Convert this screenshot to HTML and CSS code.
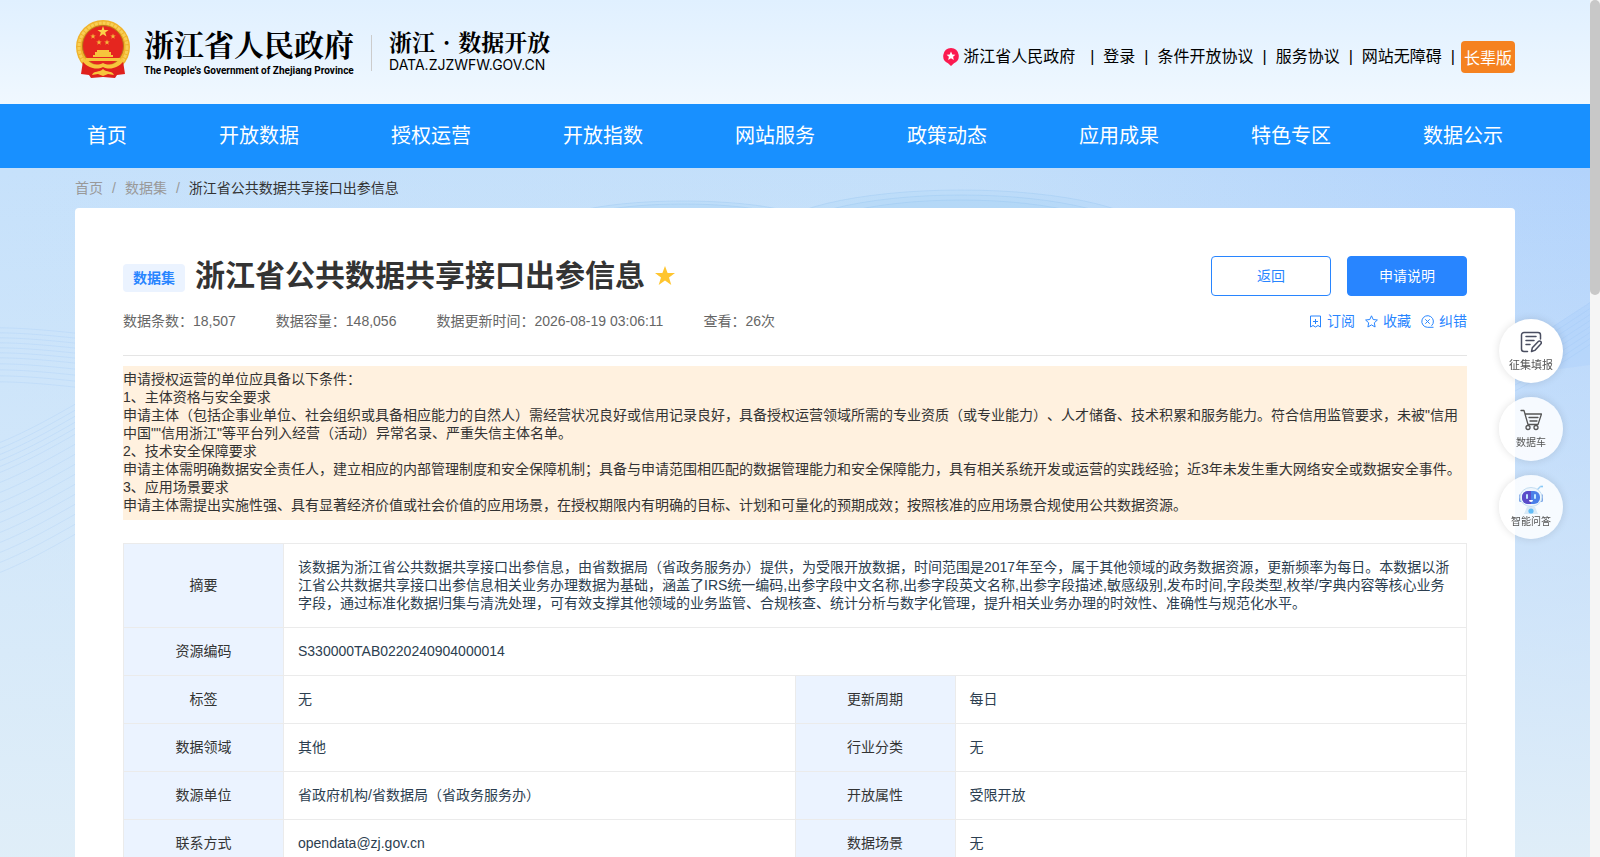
FILE: index.html
```
<!DOCTYPE html>
<html lang="zh-CN">
<head>
  <meta charset="UTF-8">
  <meta name="viewport" content="width=device-width, initial-scale=1.0">
  <title>浙江省公共数据共享接口出参信息</title>
  <link rel="stylesheet" href="styles.css">
</head>
<body>
  <header class="header">
    <div class="container header-inner">
      <a class="logo" href="#">
        <svg class="emblem" viewBox="0 0 56 60" aria-hidden="true">
          <circle cx="28" cy="28" r="27" fill="#f0b32c"/>
          <circle cx="28" cy="28" r="24" fill="none" stroke="#f8cf55" stroke-width="3" stroke-dasharray="3 1"/>
          <circle cx="28" cy="27" r="20.500" fill="#e5261f" stroke="#b9791a" stroke-width="1"/>
          <path d="M8 42 L20 46 L28 44 L36 46 L48 42 L50 55 L42 56 L40 59 L28 58 L16 59 L14 56 L6 55 Z" fill="#df201c"/>
          <path d="M9 39 C16 46 22 47 28 44 C34 47 40 46 47 39 L49 42 C42 50 34 51 28 48 C22 51 14 50 7 42 Z" fill="#f7c53c"/>
          <path d="M17 56 C19 51 24 54 28 50 C32 54 37 51 39 56 L33 55 L28 57 L23 55 Z" fill="#f7c53c"/>
          <path d="M28 7 L29.4 11 L33.6 11 L30.2 13.6 L31.5 17.6 L28 15.2 L24.5 17.6 L25.8 13.6 L22.4 11 L26.6 11 Z" fill="#fbd14a"/>
          <path d="M18 14.500l.7 2h2l-1.600 1.200.6 2-1.700-1.200-1.700 1.200.6-2-1.600-1.200h2zM38 14.500l.7 2h2l-1.600 1.200.6 2-1.700-1.200-1.700 1.200.6-2-1.600-1.200h2zM24 20.500l.7 2h2l-1.600 1.200.6 2-1.700-1.200-1.700 1.200.6-2-1.600-1.200h2zM32 20.500l.7 2h2l-1.600 1.200.6 2-1.700-1.200-1.700 1.200.6-2-1.600-1.200h2z" fill="#f5b93c"/>
          <path d="M22 31h12v2h2v3h2v2H18v-2h2v-3h2zM11 39h34v3H11z" fill="#f7c53c"/>
        </svg>
        <span class="logo-main">
          <span class="logo-name">浙江省人民政府</span>
          <span class="logo-en">The People's Government of Zhejiang Province</span>
        </span>
        <span class="divider"></span>
        <span class="logo-sub">
          <span class="logo-site">浙江 <span class="dot">·</span> 数据开放</span>
          <span class="logo-domain">DATA.ZJZWFW.GOV.CN</span>
        </span>
      </a>
      <div class="top-links">
        <svg class="pin" viewBox="0 0 16 18" aria-hidden="true">
          <path d="M8 0a8 8 0 0 1 3 15.300L8 18l-3-2.700A8 8 0 0 1 8 0z" fill="#fb1a50"/>
          <path d="M8 3.500l1.300 2.900 3.100.3-2.300 2.100.7 3.100L8 10.300l-2.800 1.600.7-3.100-2.300-2.100 3.100-.3z" fill="#fff"/>
        </svg>
        <a class="province" href="#">浙江省人民政府</a>
        <span class="bar">|</span>
        <a href="#">登录</a>
        <span class="bar">|</span>
        <a href="#">条件开放协议</a>
        <span class="bar">|</span>
        <a href="#">服务协议</a>
        <span class="bar">|</span>
        <a href="#">网站无障碍</a>
        <span class="bar">|</span>
        <button class="elder-btn" type="button">长辈版</button>
      </div>
    </div>
  </header>

  <nav class="nav">
    <div class="container nav-inner">
      <a href="#">首页</a>
      <a href="#">开放数据</a>
      <a href="#">授权运营</a>
      <a href="#">开放指数</a>
      <a href="#">网站服务</a>
      <a href="#">政策动态</a>
      <a href="#">应用成果</a>
      <a href="#">特色专区</a>
      <a href="#">数据公示</a>
    </div>
  </nav>

  <main class="main">
    <!-- background waves -->
    <svg class="waves" viewBox="0 0 1600 689" preserveAspectRatio="xMidYMin slice" aria-hidden="true">
      <defs>
        <path id="waveA" d="M-10 160 C40 158 120 170 200 180"/>
        <path id="waveB" d="M-10 320 C20 310 60 290 140 240"/>
        <path id="waveC" d="M1480 200 C1530 180 1570 150 1610 125"/>
      </defs>
      <path d="M1500 205 C1540 205 1570 200 1610 195 L1610 125 C1570 150 1530 180 1500 190 Z" fill="#a9cffb" fill-opacity="0.35"/>
      <g fill="none" stroke="#8fbdf3" stroke-opacity="0.2">
        <use href="#waveA"/><use href="#waveA" y="5"/><use href="#waveA" y="10"/><use href="#waveA" y="15"/>
        <use href="#waveA" y="20"/><use href="#waveA" y="25"/><use href="#waveA" y="30"/><use href="#waveA" y="36"/>
        <use href="#waveA" y="42"/><use href="#waveA" y="48"/><use href="#waveA" y="54"/>
        <use href="#waveB" y="-40"/><use href="#waveB" y="-34"/><use href="#waveB" y="-28"/><use href="#waveB" y="-22"/>
        <use href="#waveB" y="-16"/><use href="#waveB" y="-10"/><use href="#waveB"/><use href="#waveB" y="10"/>
        <use href="#waveB" y="20"/><use href="#waveB" y="30"/><use href="#waveB" y="40"/><use href="#waveB" y="50"/>
        <use href="#waveB" y="60"/><use href="#waveB" y="70"/><use href="#waveB" y="80"/><use href="#waveB" y="90"/>
        <use href="#waveC"/><use href="#waveC" y="6"/><use href="#waveC" y="12"/><use href="#waveC" y="18"/>
        <use href="#waveC" y="24"/><use href="#waveC" y="30"/><use href="#waveC" y="36"/><use href="#waveC" y="42"/>
      </g>
      <g fill="#a5d0f7" fill-opacity="0.2" stroke="#8fc1f0" stroke-opacity="0.3">
        <ellipse cx="688" cy="58" rx="130" ry="25"/>
        <ellipse cx="688" cy="61" rx="122" ry="25"/>
        <ellipse cx="966" cy="68" rx="190" ry="46"/>
        <ellipse cx="966" cy="73" rx="180" ry="46"/>
        <ellipse cx="966" cy="78" rx="170" ry="46"/>
      </g>
    </svg>

    <div class="container">
      <div class="breadcrumb">
        <a href="#">首页</a>
        <span>/</span>
        <a href="#">数据集</a>
        <span>/</span>
        <strong>浙江省公共数据共享接口出参信息</strong>
      </div>

      <section class="card">
        <div class="title-row">
          <span class="tag">数据集</span>
          <h1>浙江省公共数据共享接口出参信息</h1>
          <svg class="star" viewBox="0 0 20 20" aria-hidden="true">
            <path d="M10 0l2.600 7H20l-6 4.500 2.300 7.500L10 14.600 3.700 19 6 11.500 0 7h7.400z" fill="#ffc52e"/>
          </svg>
          <div class="buttons">
            <button class="btn" type="button">返回</button>
            <button class="btn btn-primary" type="button">申请说明</button>
          </div>
        </div>

        <div class="meta-row">
          <span>数据条数：18,507</span>
          <span>数据容量：148,056</span>
          <span>数据更新时间：2026-08-19 03:06:11</span>
          <span>查看：26次</span>
          <div class="actions">
            <a href="#">
              <svg viewBox="0 0 13 13" aria-hidden="true"><path d="M1.500 1h10v11L9 10.500 6.500 12 4 10.500 1.500 12zM6.500 4v5M4 6.500h5"/></svg>
              订阅
            </a>
            <a href="#">
              <svg viewBox="0 0 13 13" aria-hidden="true"><path d="M6.500.8l1.700 3.700 4.200.5-3.100 2.800.8 4.200-3.600-2.100L2.900 12l.8-4.200L.6 5l4.200-.5z"/></svg>
              收藏
            </a>
            <a href="#">
              <svg viewBox="0 0 13 13" aria-hidden="true"><path d="M10.500 10.800A5.800 5.800 0 1 0 6.500 12.300h6M4.300 4.300l4.400 4.400M8.700 4.300L4.300 8.700"/></svg>
              纠错
            </a>
          </div>
        </div>

        <div class="notice">
          <p>申请授权运营的单位应具备以下条件：</p>
          <p>1、主体资格与安全要求</p>
          <p>申请主体（包括企事业单位、社会组织或具备相应能力的自然人）需经营状况良好或信用记录良好，具备授权运营领域所需的专业资质（或专业能力）、人才储备、技术积累和服务能力。符合信用监管要求，未被"信用中国""信用浙江"等平台列入经营（活动）异常名录、严重失信主体名单。</p>
          <p>2、技术安全保障要求</p>
          <p>申请主体需明确数据安全责任人，建立相应的内部管理制度和安全保障机制；具备与申请范围相匹配的数据管理能力和安全保障能力，具有相关系统开发或运营的实践经验；近3年未发生重大网络安全或数据安全事件。</p>
          <p>3、应用场景要求</p>
          <p>申请主体需提出实施性强、具有显著经济价值或社会价值的应用场景，在授权期限内有明确的目标、计划和可量化的预期成效；按照核准的应用场景合规使用公共数据资源。</p>
        </div>

        <table class="info">
          <colgroup>
            <col class="col-label"><col><col class="col-label"><col>
          </colgroup>
          <tr>
            <th scope="row">摘要</th>
            <td colspan="3">该数据为浙江省公共数据共享接口出参信息，由省数据局（省政务服务办）提供，为受限开放数据，时间范围是2017年至今，属于其他领域的政务数据资源，更新频率为每日。本数据以浙江省公共数据共享接口出参信息相关业务办理数据为基础，涵盖了IRS统一编码,出参字段中文名称,出参字段英文名称,出参字段描述,敏感级别,发布时间,字段类型,枚举/字典内容等核心业务字段，通过标准化数据归集与清洗处理，可有效支撑其他领域的业务监管、合规核查、统计分析与数字化管理，提升相关业务办理的时效性、准确性与规范化水平。</td>
          </tr>
          <tr>
            <th scope="row">资源编码</th>
            <td colspan="3">S330000TAB0220240904000014</td>
          </tr>
          <tr>
            <th scope="row">标签</th>
            <td>无</td>
            <th scope="row">更新周期</th>
            <td>每日</td>
          </tr>
          <tr>
            <th scope="row">数据领域</th>
            <td>其他</td>
            <th scope="row">行业分类</th>
            <td>无</td>
          </tr>
          <tr>
            <th scope="row">数源单位</th>
            <td>省政府机构/省数据局（省政务服务办）</td>
            <th scope="row">开放属性</th>
            <td>受限开放</td>
          </tr>
          <tr>
            <th scope="row">联系方式</th>
            <td>opendata@zj.gov.cn</td>
            <th scope="row">数据场景</th>
            <td>无</td>
          </tr>
        </table>
      </section>
    </div>
  </main>

  <aside class="float-menu">
    <a class="float-item solid" href="#">
      <svg viewBox="0 0 22 22" aria-hidden="true" fill="none" stroke="#4a4e60" stroke-width="1.500" stroke-linecap="round" stroke-linejoin="round">
        <path d="M7.500 20.500H4a2.500 2.500 0 0 1-2.500-2.500V4A2.500 2.500 0 0 1 4 1.500h14A2.500 2.500 0 0 1 20.500 4v4M6 5.500h10M6 9.500h8M6 13.500h4"/>
        <path d="M11.500 20.500l.8-3.700 6-6.300a1.700 1.700 0 0 1 2.500 2.400l-6 6.500z"/>
      </svg>
      <span>征集填报</span>
    </a>
    <a class="float-item" href="#">
      <svg viewBox="0 0 22 22" aria-hidden="true" fill="none" stroke="#555" stroke-width="1.300" stroke-linecap="round" stroke-linejoin="round">
        <path d="M1 1.500h3l4 14h10l3.500-10.500H5M9 8.500h9M10 12h7"/>
        <circle cx="8" cy="18.500" r="2"/><circle cx="16" cy="18.500" r="2"/>
      </svg>
      <span>数据车</span>
    </a>
    <a class="float-item" href="#">
      <svg class="robot" viewBox="0 0 26 30" aria-hidden="true">
        <path d="M19 5l4-4" stroke="#9fd0f5" stroke-width="1.500"/>
        <circle cx="24" cy="1.500" r="1" fill="#7cc4f8"/>
        <rect x="1" y="9" width="3" height="8" rx="1.500" fill="#7fa8e8"/>
        <rect x="22" y="9" width="3" height="8" rx="1.500" fill="#7fa8e8"/>
        <ellipse cx="13" cy="12" rx="11" ry="9.500" fill="#eef6fd" stroke="#c3dcf0"/>
        <rect x="4" y="6" width="18" height="13" rx="6" fill="#4a7fe8"/>
        <path d="M4 12a6 6 0 0 1 6-6h3v13h-3a6 6 0 0 1-6-6z" fill="#5b4cc8"/>
        <rect x="8" y="9" width="2" height="5" rx="1" fill="#bfe8ff"/>
        <rect x="16" y="9" width="2" height="5" rx="1" fill="#bfe8ff"/>
        <path d="M11 15h4a2 2 0 0 1-4 0z" fill="#fff"/>
        <path d="M9 22h8l3 7H6z" fill="#d7e9f7"/>
        <circle cx="13" cy="26" r="2.600" fill="#62bdf8"/>
      </svg>
      <span>智能问答</span>
    </a>
  </aside>

  <div class="scrollbar" aria-hidden="true"><div class="scrollbar-thumb"></div></div>
</body>
</html>
```

FILE: styles.css
```
* {
  box-sizing: border-box;
}

html {
  scrollbar-width: none;
}

body {
  margin: 0;
  padding-right: 10px;
  font-family: "Liberation Sans", "Noto Sans CJK SC", sans-serif;
  font-size: 14px;
  line-height: 18px;
  text-spacing-trim: space-all;
  color: #333;
}

a {
  color: inherit;
  text-decoration: none;
}

button {
  font-family: inherit;
  cursor: pointer;
}

.container {
  max-width: 1440px;
  margin: 0 auto;
}

/* header */
.header {
  background: linear-gradient(#e0f0ff, #f0f8ff);
}

.header-inner {
  display: flex;
  justify-content: space-between;
  align-items: center;
  height: 104px;
  padding-bottom: 6px;
}

.logo {
  display: flex;
  align-items: center;
  color: #000;
}

.emblem {
  width: 56px;
  height: 60px;
  margin-right: 13px;
}

.logo-main,
.logo-sub {
  display: flex;
  flex-direction: column;
  margin-top: 8px;
  white-space: nowrap;
}

.logo-name {
  font-family: "Noto Serif CJK SC", "Noto Sans CJK SC", serif;
  font-size: 30px;
  font-weight: bold;
  line-height: 36px;
}

.logo-en {
  font-family: Roboto, "Liberation Sans", sans-serif;
  font-size: 10px;
  font-weight: bold;
  line-height: 20px;
}

.divider {
  width: 1px;
  height: 36px;
  margin: 8px 17px 0;
  background: #ccc;
}

.logo-site {
  font-family: "Noto Serif CJK SC", "Noto Sans CJK SC", serif;
  font-size: 23px;
  font-weight: bold;
  line-height: 24px;
}

.dot {
  margin: 0 2px;
}

.logo-domain {
  font-family: Inter, "Liberation Sans", sans-serif;
  font-size: 14px;
  line-height: 22px;
}

.top-links {
  display: flex;
  align-items: center;
  padding-top: 16px;
  font-size: 16px;
  color: #000;
}

.pin {
  width: 16px;
  height: 18px;
  margin-right: 4px;
}

.province {
  margin-right: 6px;
}

.bar {
  margin: 0 9px;
}

.bar:last-of-type {
  margin-right: 6px;
}

.elder-btn {
  height: 32px;
  padding: 0 3px;
  border: none;
  border-radius: 4px;
  background: #f58220;
  color: #fff;
  font-size: 16px;
}

/* nav */
.nav {
  background: #1890ff;
}

.nav-inner {
  display: flex;
  justify-content: space-between;
}

.nav a {
  padding: 0 12px;
  color: #fff;
  font-size: 20px;
  line-height: 64px;
}

/* main */
.main {
  position: relative;
  min-height: 2320px;
  overflow: hidden;
  background:
    linear-gradient(to bottom, rgba(224, 238, 248, 0), #e0eef8 700px),
    linear-gradient(to right, #c6e1fb, #c3dffa 60%, #b2d3fc);
}

.waves {
  position: absolute;
  top: 0;
  left: 0;
  width: 100%;
  height: 689px;
}

.main .container {
  position: relative;
}

.breadcrumb {
  display: flex;
  gap: 9px;
  line-height: 40px;
  color: #999;
}

.breadcrumb strong {
  color: #333;
  font-weight: normal;
}

.card {
  min-height: 2000px;
  padding: 48px;
  border-radius: 4px;
  background: #fff;
}

.title-row {
  display: flex;
  align-items: center;
  height: 40px;
}

.tag {
  margin: 4px 10px 0 0;
  padding: 5px 10px;
  border-radius: 4px;
  background: #ebf3ff;
  color: #2885ff;
  font-weight: bold;
}

h1 {
  margin: 0 10px 0 0;
  font-size: 30px;
  line-height: 40px;
}

.star {
  width: 20px;
  height: 20px;
}

.buttons {
  display: flex;
  gap: 16px;
  margin-left: auto;
}

.btn {
  width: 120px;
  height: 40px;
  padding: 0 0 2px;
  border: 1px solid #2885ff;
  border-radius: 4px;
  background: #fff;
  color: #2885ff;
  font-size: 14px;
}

.btn-primary {
  background: #2885ff;
  color: #fff;
}

.meta-row {
  display: flex;
  gap: 40px;
  padding: 16px 0 25px;
  border-bottom: 1px solid #e5e5e5;
  color: #666;
}

.actions {
  display: flex;
  gap: 10px;
  margin-left: auto;
  color: #2885ff;
}

.actions a {
  display: flex;
  align-items: center;
  gap: 5px;
}

.actions svg {
  width: 13px;
  height: 13px;
  fill: none;
  stroke: #2885ff;
}

.notice {
  margin: 10px 0 23px;
  padding: 4px 0 6px;
  background: #fff1df;
}

.notice p {
  margin: 0;
}

/* info table */
.info {
  width: 100%;
  table-layout: fixed;
  border-collapse: collapse;
}

.col-label {
  width: 160px;
}

.info th,
.info td {
  padding: 14px 14px 15px;
  border: 1px solid #ebebeb;
}

.info th {
  background: #ebf3ff;
  font-weight: normal;
}

.info td {
  color: #2c3e50;
}

/* floating menu on the right */
.float-menu {
  position: fixed;
  top: 319px;
  right: 37px;
  display: flex;
  flex-direction: column;
  gap: 14px;
}

.float-item {
  display: flex;
  flex-direction: column;
  align-items: center;
  justify-content: center;
  width: 64px;
  height: 64px;
  border-radius: 50%;
  background: rgba(255, 255, 255, 0.85);
  box-shadow: 0 0 8px rgba(0, 0, 0, 0.12);
  color: #555;
  font-size: 10px;
  line-height: 14px;
}

.float-item.solid {
  background: #fff;
  font-size: 11px;
}

.float-item svg {
  width: 22px;
  height: 22px;
  margin-bottom: 5px;
}

.float-item .robot {
  width: 26px;
  height: 30px;
  margin-bottom: 0;
}

/* page scrollbar */
.scrollbar {
  position: fixed;
  top: 0;
  right: 0;
  bottom: 0;
  width: 10px;
  background: #f5f5f5;
}

.scrollbar-thumb {
  height: 295px;
  border-radius: 5px;
  background: #c8c8c8;
}
```
